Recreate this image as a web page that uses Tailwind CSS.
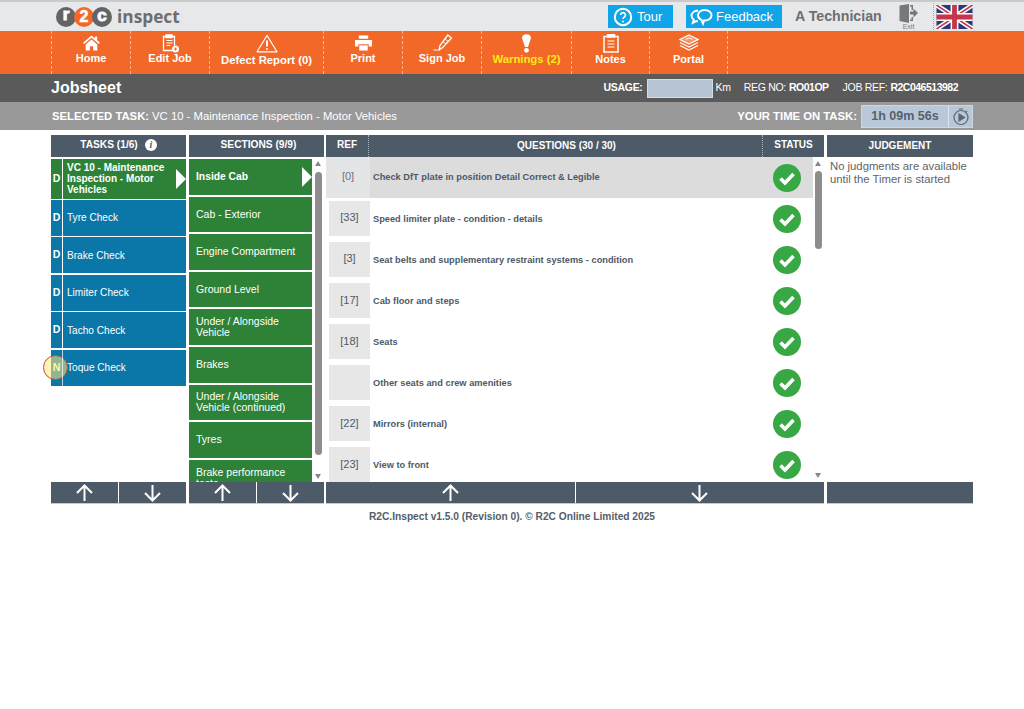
<!DOCTYPE html>
<html>
<head>
<meta charset="UTF-8" />
<meta name="viewport" content="width=device-width, initial-scale=1.0" />
<script src="https://cdn.jsdelivr.net/npm/@tailwindcss/browser@4"></script>
<title>R2C Inspect - Jobsheet</title>
</head>
<body class="bg-white font-['Liberation_Sans',Arial,sans-serif] text-[#4d5a68] h-[709px] overflow-hidden">

<!-- top bar -->
<div class="h-[31px] bg-[#e7e8e9] border-t-2 border-[#c9cacb] flex items-center pl-[56px] relative">
    <div class="flex items-center -space-x-[2px]">
        <div class="w-[20px] h-[20px] rounded-full bg-[#636466] text-white text-[17px] font-bold leading-[16px] text-center [-webkit-text-stroke:1px_white]">r</div>
        <div class="w-[20px] h-[20px] rounded-full bg-[#f26829] text-white text-[16px] font-bold leading-[20px] text-center [-webkit-text-stroke:0.6px_white]">2</div>
        <div class="w-[20px] h-[20px] rounded-full bg-[#636466] text-white text-[17px] font-bold leading-[17px] text-center [-webkit-text-stroke:1px_white]">c</div>
    </div>
    <span class="ml-[5px] text-[17.3px] font-bold font-['Open_Sans',sans-serif] text-[#6d6e71] leading-none">inspect</span>
    <div class="ml-auto flex items-center h-full">
        <div class="w-[65px] h-[23px] bg-[#10a5e8] flex items-center pl-[5px] text-white text-[13px]">
            <svg class="w-[20px] h-[20px]" viewBox="0 0 20 20" fill="none" stroke="white" stroke-width="2"><circle cx="10" cy="10" r="8.2"/><path d="M7.6 8a2.400 2.400 0 1 1 3.600 2.100c-.8.5-1.200.9-1.200 1.900" stroke-width="1.700"/><circle cx="10" cy="14.600" r="1" fill="white" stroke="none"/></svg>
            <span class="ml-[4px]">Tour</span>
        </div>
        <div class="ml-[13px] w-[96px] h-[23px] bg-[#10a5e8] flex items-center pl-[4px] text-white text-[13px]">
            <svg class="w-[23px] h-[20px]" viewBox="0 0 23 20" fill="none" stroke="white" stroke-width="2"><path d="M8 3.500c-3.600.3-6.500 2.500-6.500 5.300 0 1.600.9 3 2.300 4l-1 3 3.600-1.700c.5.1 1 .2 1.600.2"/><path d="M14.500 3c4 0 7 2.300 7 5.300s-3 5.200-6.600 5.200c-.3 0-.6 0-.9 0l-1 3-1.700-3.700c-2-.9-3.300-2.600-3.300-4.500 0-3 3-5.300 6.500-5.300z"/></svg>
            <span class="ml-[3px]">Feedback</span>
        </div>
        <span class="ml-[13px] w-[86px] text-[14.200px] font-bold text-[#6d6e71] whitespace-nowrap">A Technician</span>
        <div class="ml-[18px] w-[19px] flex flex-col items-center">
            <svg class="w-[19px] h-[19px]" viewBox="0 0 19 19" fill="#77787b"><path d="M0.500 1.500L10 0v19l-9.500-2z"/><path d="M11 1h3v5h-1.500V2.500H11z"/><path d="M12.500 13H14v4h-3v-1.500h1.500z"/><path d="M11 7.500h3.500V4.500L19 9l-4.500 4.500v-3H11z"/></svg>
            <span class="text-[7px] leading-[7px] text-[#77787b]">Exit</span>
        </div>
        <div class="ml-[15px] h-[27px] border-l border-dotted border-[#a5a5a5]"></div>
        <svg class="ml-[2px] mr-[51px] w-[37px] h-[24px]" viewBox="0 0 60 40">
            <rect width="60" height="40" fill="#2a3a78"/>
            <path d="M0 0L60 40M60 0L0 40" stroke="white" stroke-width="8"/>
            <path d="M0 0L60 40M60 0L0 40" stroke="#c6354a" stroke-width="2.600"/>
            <path d="M30 0V40M0 20H60" stroke="white" stroke-width="13"/>
            <path d="M30 0V40M0 20H60" stroke="#c6354a" stroke-width="8"/>
        </svg>
    </div>
</div>

<!-- orange nav -->
<nav class="h-[43px] bg-[#f26829] pl-[51px] flex text-white text-[11px] font-bold text-center">
    <div class="w-[79px] border-l border-dashed border-[#f9b48f] flex flex-col items-center pt-[4px]">
        <svg class="w-[19px] h-[16px]" viewBox="0 0 19 17" fill="white"><path d="M9.500 0.500L0.500 8.300l1.200 1.300 7.800-6.700 7.800 6.700 1.200-1.300-3-2.600V1.500h-2.400v2.100z"/><path d="M3.300 10L9.500 4.700 15.700 10v6.500h-4.500v-4.500H7.800v4.500H3.300z"/></svg>
        <span class="mt-[1px] leading-[13px]">Home</span>
    </div>
    <div class="w-[79px] border-l border-dashed border-[#f9b48f] flex flex-col items-center pt-[3px]">
        <svg class="w-[19px] h-[19px] -mb-[1px] ml-[3px]" viewBox="0 0 19 19" fill="none" stroke="white" stroke-width="1.300"><path d="M10.500 16.500H1.500V2.500h11v9"/><path d="M4 1h6v2.500H4z" fill="white"/><path d="M4.500 6.500h6M4.500 9h6M4.500 11.500h4" stroke-width="1"/><circle cx="13.500" cy="15" r="3.500" fill="white" stroke="none"/><path d="M13.500 13.500v3M12 15h3" stroke="#f26829" stroke-width="1"/></svg>
        <span class="leading-[13px]">Edit Job</span>
    </div>
    <div class="w-[114px] border-l border-dashed border-[#f9b48f] flex flex-col items-center pt-[3px]">
        <svg class="w-[22px] h-[19px]" viewBox="0 0 22 19" fill="none" stroke="white" stroke-width="1.200"><path d="M11 1.500L1 17.800h20z" stroke-linejoin="round"/><path d="M11 6.500v6" stroke-width="2"/><circle cx="11" cy="15" r="1.100" fill="white" stroke="none"/></svg>
        <span class="mt-[1px] leading-[13px] whitespace-nowrap text-[11.300px]">Defect Report (0)</span>
    </div>
    <div class="w-[79px] border-l border-dashed border-[#f9b48f] flex flex-col items-center pt-[4px]">
        <svg class="w-[19px] h-[16px]" viewBox="0 0 19 17" fill="white"><path d="M4.500 0.500h10v3.500h-10z"/><path d="M0.500 5.200h18v7h-3.500v-2.500H4v2.500H0.500z"/><path d="M5 11h9v5.500H5z"/></svg>
        <span class="mt-[1px] leading-[13px]">Print</span>
    </div>
    <div class="w-[79px] border-l border-dashed border-[#f9b48f] flex flex-col items-center pt-[3px]">
        <svg class="w-[20px] h-[17px] ml-[2px]" viewBox="0 0 20 17" fill="none" stroke="white" stroke-width="1.300"><path d="M7 11.500L6 16l3.700-2.500L18.500 4 14.800 1z"/><path d="M10 7.500l3 2.500M12 5l3 2.500" stroke-width="1"/><path d="M0.500 16h4" stroke-width="1"/></svg>
        <span class="mt-[1px] leading-[13px]">Sign Job</span>
    </div>
    <div class="w-[90px] border-l border-dashed border-[#f9b48f] flex flex-col items-center pt-[3px]">
        <svg class="w-[11px] h-[19px]" viewBox="0 0 11 19" fill="white"><path d="M1 4a4.500 3.800 0 0 1 9 0L7 13H4z"/><circle cx="5.500" cy="16.300" r="2.400"/></svg>
        <span class="leading-[13px] text-[#ffe81a] whitespace-nowrap text-[11.300px]">Warnings (2)</span>
    </div>
    <div class="w-[78px] border-l border-dashed border-[#f9b48f] flex flex-col items-center pt-[3px]">
        <svg class="w-[16px] h-[19px]" viewBox="0 0 16 19" fill="none" stroke="white" stroke-width="1.500"><path d="M1 2.500h14v15.500H1z"/><path d="M4.500 0.500h7v2.500h-7z" fill="white"/><path d="M4.500 7h7M4.500 10h7M4.500 13h7" stroke-width="1.200"/></svg>
        <span class="leading-[13px]">Notes</span>
    </div>
    <div class="w-[79px] border-x border-dashed border-[#f9b48f] flex flex-col items-center pt-[3px]">
        <svg class="w-[20px] h-[18px]" viewBox="0 0 20 18" fill="none" stroke="white" stroke-width="1.300"><path d="M10 1l9 4.500-9 4.500-9-4.500z" fill="white" fill-opacity="0.300"/><path d="M1 8.500l9 4.500 9-4.500M1 11.500l9 4.500 9-4.500"/><path d="M6.500 5.500L10 3.800l3.500 1.700" stroke-width="1"/></svg>
        <span class="mt-[1px] leading-[13px]">Portal</span>
    </div>
</nav>

<!-- jobsheet bar -->
<div class="h-[28px] bg-[#5a5a5a] pl-[51px] pr-[66px] flex items-center text-white text-[10.500px] tracking-[-0.3px]">
    <h1 class="text-[16px] font-bold tracking-normal">Jobsheet</h1>
    <span class="ml-auto font-bold">USAGE:</span>
    <div class="ml-[4px] w-[66px] h-[19px] bg-[#b6c4d3] border border-[#d3dbe3]"></div>
    <span class="ml-[3px]">Km</span>
    <span class="ml-[13px]">REG NO:</span>
    <span class="ml-[3px] font-bold tracking-[-0.5px]">RO01OP</span>
    <span class="ml-[14px]">JOB REF:</span>
    <span class="ml-[3px] font-bold tracking-[-0.5px]">R2C046513982</span>
</div>

<!-- selected task bar -->
<div class="h-[28px] bg-[#999999] pl-[52px] pr-[51px] flex items-center text-white text-[11.300px]">
    <span class="font-bold">SELECTED TASK:</span>
    <span class="ml-[3px]">VC 10 - Maintenance Inspection - Motor Vehicles</span>
    <span class="ml-auto font-bold">YOUR TIME ON TASK:</span>
    <div class="ml-[4px] mt-[1px] w-[112px] h-[23px] bg-[#b9c8d8] border border-[#ccd7e2] flex items-center">
        <span class="w-[87px] text-center text-[#56616d] text-[12.500px] font-bold border-r border-[#dfe6ed] leading-[21px]">1h 09m 56s</span>
        <svg class="ml-[3px] w-[18px] h-[19px]" viewBox="0 0 18 19" fill="none" stroke="#5d6670" stroke-width="1.200"><circle cx="9" cy="10.500" r="7"/><path d="M7 2h4M15 4l-1.500 1.500"/><path d="M7 7l5.500 3.500L7 14z" fill="#5d6670"/></svg>
    </div>
</div>

<!-- main grid -->
<div class="mt-[5px] ml-[51px] w-[922px] flex gap-[3px]">
    <!-- tasks -->
    <div class="w-[135px]">
        <div class="h-[22px] pb-[2px] bg-[#4d5a68] text-white text-[10.200px] font-bold flex items-center justify-center">
            TASKS (1/6)
            <span class="ml-[7px] w-[12px] h-[12px] rounded-full bg-white text-[#4d5a68] font-['Liberation_Serif',serif] italic text-[10px] leading-[12px] text-center">i</span>
        </div>
        <div class="h-[325px] pt-[2px] text-white text-[10.100px] relative">
            <div class="h-[39.500px] mb-[1px] bg-[#2e8237] flex items-center font-bold leading-[11px] text-[10px]">
                <span class="w-[12px] h-full border-r border-white flex items-center justify-center shrink-0 text-[10.500px]">D</span>
                <span class="pl-[4px] w-[112px] shrink-0">VC 10 - Maintenance Inspection - Motor Vehicles</span>
                <span class="ml-auto border-y-[10px] border-y-transparent border-l-[10px] border-l-white"></span>
            </div>
            <div class="h-[36px] mb-[1.600px] bg-[#0a77a8] flex items-center"><span class="w-[12px] h-full border-r border-white flex items-center justify-center font-bold text-[10.500px]">D</span><span class="pl-[4px]">Tyre Check</span></div>
            <div class="h-[36px] mb-[1.600px] bg-[#0a77a8] flex items-center"><span class="w-[12px] h-full border-r border-white flex items-center justify-center font-bold text-[10.500px]">D</span><span class="pl-[4px]">Brake Check</span></div>
            <div class="h-[36px] mb-[1.600px] bg-[#0a77a8] flex items-center"><span class="w-[12px] h-full border-r border-white flex items-center justify-center font-bold text-[10.500px]">D</span><span class="pl-[4px]">Limiter Check</span></div>
            <div class="h-[36px] mb-[1.600px] bg-[#0a77a8] flex items-center"><span class="w-[12px] h-full border-r border-white flex items-center justify-center font-bold text-[10.500px]">D</span><span class="pl-[4px]">Tacho Check</span></div>
            <div class="h-[36px] bg-[#0a77a8] flex items-center relative">
                <span class="absolute left-[-8px] top-[5.500px] w-[25px] h-[25px] rounded-full border border-[#b9503f] bg-[#ffe97a]/55"></span>
                <span class="relative w-[12px] h-full border-r border-white/70 flex items-center justify-center font-bold text-[10.500px] text-[#fff6b0]">N</span><span class="pl-[4px]">Toque Check</span>
            </div>
        </div>
        <div class="h-[22px] bg-white flex gap-[1px] border-b border-[#c5cad0]">
            <div class="flex-1 bg-[#4d5a68] flex items-center justify-center"><svg class="w-[19px] h-[18px]" viewBox="0 0 19 18" fill="none" stroke="white" stroke-width="2"><path d="M9.500 17V2M2 9l7.500-7.500L17 9"/></svg></div>
            <div class="flex-1 bg-[#4d5a68] flex items-center justify-center"><svg class="w-[19px] h-[18px]" viewBox="0 0 19 18" fill="none" stroke="white" stroke-width="2"><path d="M9.500 1v15M2 9l7.500 7.500L17 9"/></svg></div>
        </div>
    </div>

    <!-- sections -->
    <div class="w-[135px]">
        <div class="h-[22px] pb-[2px] pl-[4px] bg-[#4d5a68] text-white text-[10.200px] font-bold flex items-center justify-center">SECTIONS (9/9)</div>
        <div class="h-[325px] pt-[2px] flex overflow-hidden text-white text-[10.500px] leading-[11px]">
            <div class="w-[123px] shrink-0">
                <div class="h-[35.600px] mb-[2px] bg-[#2e8237] flex items-center pl-[7px] font-bold text-[10.300px]">Inside Cab<span class="ml-auto border-y-[10px] border-y-transparent border-l-[10px] border-l-white"></span></div>
                <div class="h-[35.600px] mb-[2px] bg-[#2e8237] flex items-center pl-[7px]">Cab - Exterior</div>
                <div class="h-[35.600px] mb-[2px] bg-[#2e8237] flex items-center pl-[7px]">Engine Compartment</div>
                <div class="h-[35.600px] mb-[2px] bg-[#2e8237] flex items-center pl-[7px]">Ground Level</div>
                <div class="h-[35.600px] mb-[2px] bg-[#2e8237] flex items-center pl-[7px]">Under / Alongside<br>Vehicle</div>
                <div class="h-[35.600px] mb-[2px] bg-[#2e8237] flex items-center pl-[7px]">Brakes</div>
                <div class="h-[35.600px] mb-[2px] bg-[#2e8237] flex items-center pl-[7px]">Under / Alongside<br>Vehicle (continued)</div>
                <div class="h-[35.600px] mb-[2px] bg-[#2e8237] flex items-center pl-[7px]">Tyres</div>
                <div class="h-[35.600px] bg-[#2e8237] flex items-center pl-[7px]">Brake performance<br>tests</div>
            </div>
            <div class="flex-1 flex flex-col items-center pt-[2px]">
                <span class="border-x-[3.500px] border-x-transparent border-b-[5px] border-b-[#888]"></span>
                <div class="mt-[6px] w-[7px] h-[283px] rounded-full bg-[#8d8d8d]"></div>
                <span class="mt-[19px] border-x-[3.500px] border-x-transparent border-t-[5px] border-t-[#888]"></span>
            </div>
        </div>
        <div class="h-[22px] bg-white flex gap-[1px] border-b border-[#c5cad0]">
            <div class="flex-1 bg-[#4d5a68] flex items-center justify-center"><svg class="w-[19px] h-[18px]" viewBox="0 0 19 18" fill="none" stroke="white" stroke-width="2"><path d="M9.500 17V2M2 9l7.500-7.500L17 9"/></svg></div>
            <div class="flex-1 bg-[#4d5a68] flex items-center justify-center"><svg class="w-[19px] h-[18px]" viewBox="0 0 19 18" fill="none" stroke="white" stroke-width="2"><path d="M9.500 1v15M2 9l7.500 7.500L17 9"/></svg></div>
        </div>
    </div>

    <!-- questions -->
    <div class="w-[498px] -ml-[1px]">
        <div class="h-[22px] bg-[#4d5a68] text-white text-[10px] font-bold flex items-center text-center">
            <span class="w-[43px] border-r border-dotted border-[#aab2ba] leading-[20px] pb-[2px]">REF</span>
            <span class="flex-1 pb-[2px] pl-[2px]">QUESTIONS (30 / 30)</span>
            <span class="w-[62px] border-l border-dotted border-[#aab2ba] leading-[20px] pb-[2px]">STATUS</span>
        </div>
        <div class="h-[325px] flex overflow-hidden text-[9.250px] font-bold">
            <div class="w-[487px] shrink-0">
                <div class="h-[41px] bg-[#dcdcdc] flex items-center">
                    <span class="w-[44px] h-full bg-[#e4e5e6] flex items-center justify-center text-[11px] font-normal text-[#6b7480] pb-[3px]">[0]</span>
                    <span class="pl-[3px]">Check DfT plate in position Detail Correct &amp; Legible</span>
                    <svg class="ml-auto mr-[12px] w-[28px] h-[28px]" viewBox="0 0 28 28"><circle cx="14" cy="14" r="14" fill="#38a845"/><path d="M7.500 14.500l4.500 4.500 8.500-9" fill="none" stroke="white" stroke-width="3.600"/></svg>
                </div>
                <div class="h-[41px] flex items-center">
                    <span class="ml-[3px] w-[41px] h-[35px] bg-[#e7e7e8] flex items-center justify-center text-[11px] font-normal text-[#4d5a68] pb-[3px]">[33]</span>
                    <span class="pl-[3px] pt-[2px]">Speed limiter plate - condition - details</span>
                    <svg class="ml-auto mr-[12px] w-[28px] h-[28px]" viewBox="0 0 28 28"><circle cx="14" cy="14" r="14" fill="#38a845"/><path d="M7.500 14.500l4.500 4.500 8.500-9" fill="none" stroke="white" stroke-width="3.600"/></svg>
                </div>
                <div class="h-[41px] flex items-center">
                    <span class="ml-[3px] w-[41px] h-[35px] bg-[#e7e7e8] flex items-center justify-center text-[11px] font-normal text-[#4d5a68] pb-[3px]">[3]</span>
                    <span class="pl-[3px] pt-[2px]">Seat belts and supplementary restraint systems - condition</span>
                    <svg class="ml-auto mr-[12px] w-[28px] h-[28px]" viewBox="0 0 28 28"><circle cx="14" cy="14" r="14" fill="#38a845"/><path d="M7.500 14.500l4.500 4.500 8.500-9" fill="none" stroke="white" stroke-width="3.600"/></svg>
                </div>
                <div class="h-[41px] flex items-center">
                    <span class="ml-[3px] w-[41px] h-[35px] bg-[#e7e7e8] flex items-center justify-center text-[11px] font-normal text-[#4d5a68]">[17]</span>
                    <span class="pl-[3px] pt-[2px]">Cab floor and steps</span>
                    <svg class="ml-auto mr-[12px] w-[28px] h-[28px]" viewBox="0 0 28 28"><circle cx="14" cy="14" r="14" fill="#38a845"/><path d="M7.500 14.500l4.500 4.500 8.500-9" fill="none" stroke="white" stroke-width="3.600"/></svg>
                </div>
                <div class="h-[41px] flex items-center">
                    <span class="ml-[3px] w-[41px] h-[35px] bg-[#e7e7e8] flex items-center justify-center text-[11px] font-normal text-[#4d5a68]">[18]</span>
                    <span class="pl-[3px] pt-[2px]">Seats</span>
                    <svg class="ml-auto mr-[12px] w-[28px] h-[28px]" viewBox="0 0 28 28"><circle cx="14" cy="14" r="14" fill="#38a845"/><path d="M7.500 14.500l4.500 4.500 8.500-9" fill="none" stroke="white" stroke-width="3.600"/></svg>
                </div>
                <div class="h-[41px] flex items-center">
                    <span class="ml-[3px] w-[41px] h-[35px] bg-[#e7e7e8]"></span>
                    <span class="pl-[3px] pt-[2px]">Other seats and crew amenities</span>
                    <svg class="ml-auto mr-[12px] w-[28px] h-[28px]" viewBox="0 0 28 28"><circle cx="14" cy="14" r="14" fill="#38a845"/><path d="M7.500 14.500l4.500 4.500 8.500-9" fill="none" stroke="white" stroke-width="3.600"/></svg>
                </div>
                <div class="h-[41px] flex items-center">
                    <span class="ml-[3px] w-[41px] h-[35px] bg-[#e7e7e8] flex items-center justify-center text-[11px] font-normal text-[#4d5a68]">[22]</span>
                    <span class="pl-[3px] pt-[2px]">Mirrors (internal)</span>
                    <svg class="ml-auto mr-[12px] w-[28px] h-[28px]" viewBox="0 0 28 28"><circle cx="14" cy="14" r="14" fill="#38a845"/><path d="M7.500 14.500l4.500 4.500 8.500-9" fill="none" stroke="white" stroke-width="3.600"/></svg>
                </div>
                <div class="h-[41px] flex items-center">
                    <span class="ml-[3px] w-[41px] h-[35px] bg-[#e7e7e8] flex items-center justify-center text-[11px] font-normal text-[#4d5a68]">[23]</span>
                    <span class="pl-[3px] pt-[2px]">View to front</span>
                    <svg class="ml-auto mr-[12px] w-[28px] h-[28px]" viewBox="0 0 28 28"><circle cx="14" cy="14" r="14" fill="#38a845"/><path d="M7.500 14.500l4.500 4.500 8.500-9" fill="none" stroke="white" stroke-width="3.600"/></svg>
                </div>
            </div>
            <div class="flex-1 flex flex-col items-center pt-[4px] pr-[1px]">
                <span class="border-x-[3.500px] border-x-transparent border-b-[5px] border-b-[#888]"></span>
                <div class="mt-[5px] w-[7px] h-[78px] rounded-full bg-[#8d8d8d]"></div>
                <span class="mt-[224px] border-x-[3.500px] border-x-transparent border-t-[5px] border-t-[#888]"></span>
            </div>
        </div>
        <div class="h-[22px] bg-white flex gap-[1px] border-b border-[#c5cad0]">
            <div class="flex-1 bg-[#4d5a68] flex items-center justify-center"><svg class="w-[19px] h-[18px]" viewBox="0 0 19 18" fill="none" stroke="white" stroke-width="2"><path d="M9.500 17V2M2 9l7.500-7.500L17 9"/></svg></div>
            <div class="flex-1 bg-[#4d5a68] flex items-center justify-center"><svg class="w-[19px] h-[18px]" viewBox="0 0 19 18" fill="none" stroke="white" stroke-width="2"><path d="M9.500 1v15M2 9l7.500 7.500L17 9"/></svg></div>
        </div>
    </div>

    <!-- judgement -->
    <div class="flex-1">
        <div class="h-[22px] pb-[2px] bg-[#4d5a68] text-white text-[10px] font-bold flex items-center justify-center">JUDGEMENT</div>
        <p class="h-[325px] pt-[3px] pl-[3px] text-[11.300px] leading-[12.500px] text-[#5f6368]">No judgments are available until the Timer is started</p>
        <div class="h-[22px] bg-[#4d5a68] border-b border-[#c5cad0]"></div>
    </div>
</div>

<footer class="mt-[5px] w-[1024px] text-center text-[10.200px] font-bold text-[#555e68]">R2C.Inspect v1.5.0 (Revision 0). © R2C Online Limited 2025</footer>

</body>
</html>
